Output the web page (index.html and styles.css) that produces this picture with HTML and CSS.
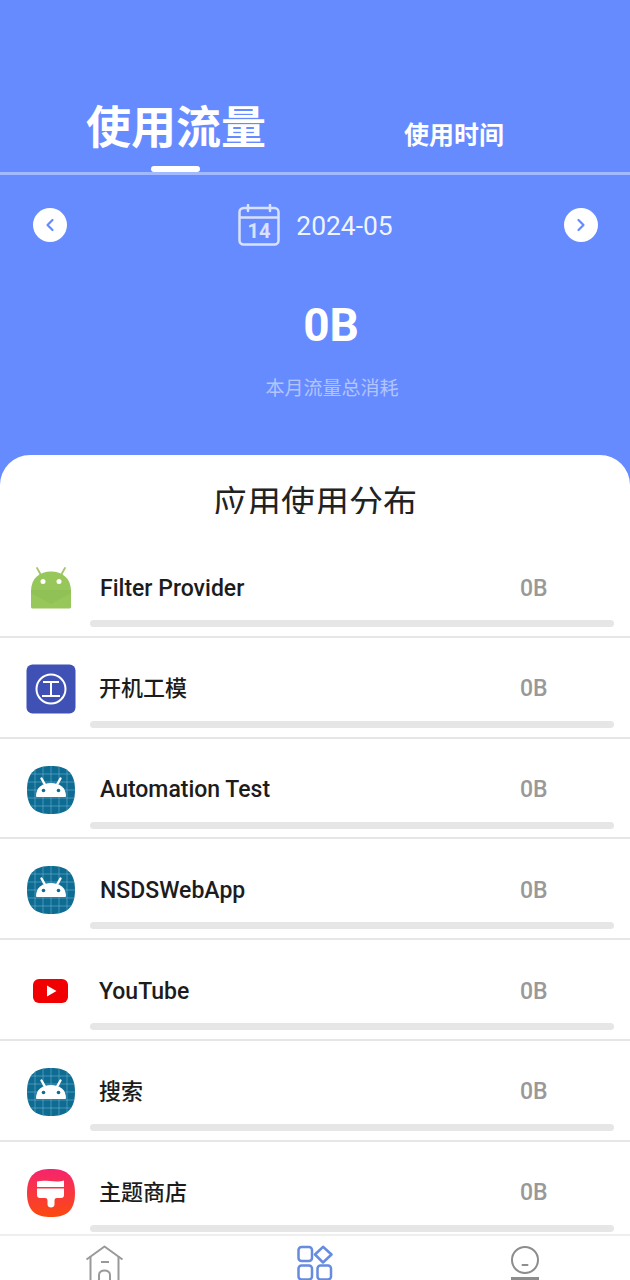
FILE: index.html
```html
<!DOCTYPE html>
<html lang="en">
<head>
    <meta charset="UTF-8">
    <meta name="viewport" content="width=device-width, initial-scale=1.0">
    <title>流量统计</title>
    <link rel="stylesheet" href="styles.css">
</head>
<body>
    <!-- Shared icon for apps without their own artwork -->
    <svg class="defs" width="0" height="0">
        <defs>
            <clipPath id="squircle">
                <path d="M25 1C39 1 49 6 49 25C49 44 39 49 25 49C11 49 1 44 1 25C1 6 11 1 25 1Z"/>
            </clipPath>
        </defs>
        <symbol id="icon-default" viewBox="0 0 50 50">
            <g clip-path="url(#squircle)">
                <rect width="50" height="50" fill="#0e6c92"/>
                <path d="M1 9H49M1 17H49M1 25H49M1 33H49M1 41H49M9 1V49M17 1V49M25 1V49M33 1V49M41 1V49" stroke="#5fa8c6" stroke-width="0.7" fill="none"/>
            </g>
            <path d="M10 31C10 23 16 18 25 18C34 18 40 23 40 31C40 31.500 39.500 32 39 32H11C10.500 32 10 31.500 10 31Z" fill="#fff"/>
            <path d="M15.500 13.500L19.500 20.500M34.500 13.500L30.500 20.500" stroke="#fff" stroke-width="2.400" stroke-linecap="round"/>
            <circle cx="17.500" cy="25.500" r="1.800" fill="#0e6c92"/>
            <circle cx="32.500" cy="25.500" r="1.800" fill="#0e6c92"/>
        </symbol>
    </svg>

    <div class="page">
        <!-- Blue summary header -->
        <header class="header">
            <div class="tabs">
                <div class="tab tab-active">
                    <span class="tab-label">使用流量</span>
                    <span class="tab-mark"></span>
                </div>
                <div class="tab">
                    <span class="tab-label">使用时间</span>
                </div>
            </div>

            <div class="date-row">
                <button class="arrow" type="button">
                    <svg width="12" height="14" viewBox="0 0 12 14"><path d="M8.500 2L3.500 7L8.500 12" fill="none" stroke="#668bff" stroke-width="2.200" stroke-linecap="round" stroke-linejoin="round"/></svg>
                </button>
                <div class="date">
                    <svg class="calendar" width="42" height="42" viewBox="0 0 42 42">
                        <rect x="1.500" y="4" width="39" height="36.500" rx="4" fill="none" stroke="#fff" stroke-width="2.500"/>
                        <path d="M2 13.500H40M10 1V7M32 1V7" fill="none" stroke="#fff" stroke-width="2.500" stroke-linecap="round"/>
                        <text x="21" y="33.500" class="calendar-day">14</text>
                    </svg>
                    <span class="date-text">2024-05</span>
                </div>
                <button class="arrow" type="button">
                    <svg width="12" height="14" viewBox="0 0 12 14"><path d="M3.500 2L8.500 7L3.500 12" fill="none" stroke="#668bff" stroke-width="2.200" stroke-linecap="round" stroke-linejoin="round"/></svg>
                </button>
            </div>

            <div class="total">0B</div>
            <div class="total-caption">本月流量总消耗</div>
        </header>

        <!-- App usage list -->
        <main class="sheet">
            <h2 class="sheet-title">应用使用分布</h2>
            <ul class="app-list">
                <li class="app-row">
                    <div class="app-head">
                        <svg class="app-icon" viewBox="0 0 50 50">
                            <path d="M11 5L15 12M39 5L35 12" stroke="#a4c46c" stroke-width="1.800" stroke-linecap="round"/>
                            <path d="M5 44V28C5 15 14 8.500 25 8.500C36 8.500 45 15 45 28V44C45 45 44 45.500 43 45.500H7C6 45.500 5 45 5 44Z" fill="#97c65b"/>
                            <path d="M5 27H45V30L25 41L5 30Z" fill="#88b850" opacity="0.400"/>
                            <circle cx="17" cy="18.500" r="2.500" fill="#fff"/>
                            <circle cx="33" cy="18.500" r="2.500" fill="#fff"/>
                        </svg>
                        <span class="app-name">Filter Provider</span>
                        <span class="app-value">0B</span>
                    </div>
                    <div class="app-bar"></div>
                </li>
                <li class="app-row">
                    <div class="app-head">
                        <svg class="app-icon" viewBox="0 0 50 50">
                            <rect x="0.500" y="0.500" width="49" height="49" rx="6" fill="#3f51b5"/>
                            <circle cx="25" cy="25" r="14.500" fill="none" stroke="#fff" stroke-width="2"/>
                            <path d="M17 18H33M25 18V32M16 32H34" fill="none" stroke="#fff" stroke-width="2"/>
                        </svg>
                        <span class="app-name app-name-cjk">开机工模</span>
                        <span class="app-value">0B</span>
                    </div>
                    <div class="app-bar"></div>
                </li>
                <li class="app-row">
                    <div class="app-head">
                        <svg class="app-icon"><use href="#icon-default"/></svg>
                        <span class="app-name">Automation Test</span>
                        <span class="app-value">0B</span>
                    </div>
                    <div class="app-bar"></div>
                </li>
                <li class="app-row">
                    <div class="app-head">
                        <svg class="app-icon"><use href="#icon-default"/></svg>
                        <span class="app-name">NSDSWebApp</span>
                        <span class="app-value">0B</span>
                    </div>
                    <div class="app-bar"></div>
                </li>
                <li class="app-row">
                    <div class="app-head">
                        <svg class="app-icon" viewBox="0 0 50 50">
                            <rect x="7" y="13" width="35" height="24" rx="6" fill="#f00000"/>
                            <path d="M21 19.500L30.500 25L21 30.500Z" fill="#fff"/>
                        </svg>
                        <span class="app-name app-name-yt">YouTube</span>
                        <span class="app-value">0B</span>
                    </div>
                    <div class="app-bar"></div>
                </li>
                <li class="app-row">
                    <div class="app-head">
                        <svg class="app-icon"><use href="#icon-default"/></svg>
                        <span class="app-name app-name-cjk">搜索</span>
                        <span class="app-value">0B</span>
                    </div>
                    <div class="app-bar"></div>
                </li>
                <li class="app-row app-row-last">
                    <div class="app-head">
                        <svg class="app-icon" viewBox="0 0 50 50">
                            <defs>
                                <linearGradient id="theme-bg" x1="0" y1="0" x2="0" y2="1">
                                    <stop offset="0" stop-color="#f5246f"/>
                                    <stop offset="1" stop-color="#fb4a0e"/>
                                </linearGradient>
                            </defs>
                            <path d="M25 1C39 1 49 6 49 25C49 44 39 49 25 49C11 49 1 44 1 25C1 6 11 1 25 1Z" fill="url(#theme-bg)"/>
                            <path d="M11 13.500C19 11.500 30 15 38 12.500V19H11Z" fill="#fff"/>
                            <path d="M11 20.500H38V27C38 29 37 30 35 30H31C29 30 28.500 31 28.500 33V36.500C28.500 40.500 21.500 40.500 21.500 36.500V33C21.500 31 21 30 19 30H14C12 30 11 29 11 27Z" fill="#fff"/>
                        </svg>
                        <span class="app-name app-name-cjk">主题商店</span>
                        <span class="app-value">0B</span>
                    </div>
                    <div class="app-bar"></div>
                </li>
            </ul>

            <!-- Bottom navigation, cut off by the window edge -->
            <nav class="bottom-nav">
                <div class="nav-item">
                    <svg width="40" height="44" viewBox="0 0 40 44" fill="none" stroke="#999" stroke-width="2" stroke-linejoin="round">
                        <path d="M1.500 14.500L19.500 1.500L37.500 14.500"/>
                        <path d="M5.500 11V40C5.500 42 7 43 9 43H30C32 43 33.500 42 33.500 40V11"/>
                        <path d="M16 17H24M14 43V30C14 24 25 24 25 30V43"/>
                    </svg>
                </div>
                <div class="nav-item">
                    <svg width="36" height="44" viewBox="0 0 36 44" fill="none" stroke="#668bdf" stroke-width="2.500">
                        <rect x="1.500" y="2" width="13.500" height="14" rx="3"/>
                        <path d="M26 1.800L34.500 9.500L26 17.500L18 9.500Z" stroke-linejoin="round"/>
                        <rect x="1.500" y="20.500" width="13.500" height="14" rx="3"/>
                        <rect x="20.500" y="20.500" width="13.500" height="14" rx="3"/>
                    </svg>
                </div>
                <div class="nav-item">
                    <svg width="30" height="44" viewBox="0 0 30 44" fill="none" stroke="#8d8d8d" stroke-width="2">
                        <ellipse cx="15" cy="15" rx="13" ry="13"/>
                        <path d="M12.500 20H17.500" stroke-linecap="round"/>
                        <path d="M1 34H29" stroke-width="4"/>
                    </svg>
                </div>
            </nav>
        </main>
    </div>
</body>
</html>
```

FILE: styles.css
```css
/* General Reset */
body, html {
    margin: 0;
    padding: 0;
    height: 1280px;
    overflow: hidden;
    font-family: 'Roboto', 'Noto Sans CJK SC', sans-serif;
}

.defs {
    position: absolute;
}

.page {
    display: flex;
    flex-direction: column;
    height: 1280px;
    background-color: #668bff;
}

/* Header */
.header {
    height: 455px;
    flex-shrink: 0;
    color: white;
}

.tabs {
    display: flex;
    align-items: flex-end;
    height: 172px;
    padding: 0 37px;
    border-bottom: 3px solid rgba(255, 255, 255, 0.4);
}

.tab {
    flex: 1;
    display: flex;
    flex-direction: column;
    align-items: center;
    padding-bottom: 19px;
}

.tab-label {
    font-size: 25px;
    font-weight: 700;
    line-height: 34px;
}

.tab-active {
    padding-bottom: 0;
}

.tab-active .tab-label {
    font-size: 45px;
    line-height: 54px;
}

.tab-mark {
    width: 49px;
    height: 6px;
    margin: 10px 2px 0 0;
    border-radius: 3px;
    background: white;
}

.date-row {
    display: flex;
    justify-content: space-between;
    align-items: center;
    height: 42px;
    margin-top: 29px;
    padding: 0 32px 0 33px;
}

.arrow {
    display: flex;
    justify-content: center;
    align-items: center;
    width: 34px;
    height: 34px;
    padding: 0;
    border: none;
    border-radius: 50%;
    background: white;
}

.date {
    display: flex;
    align-items: center;
    gap: 16px;
}

.calendar {
    opacity: 0.75;
}

.calendar-day {
    font-size: 20px;
    font-weight: 700;
    fill: white;
    text-anchor: middle;
}

.date-text {
    padding-top: 1px;
    font-size: 26.4px;
    line-height: 32px;
    color: rgba(255, 255, 255, 0.92);
}

.total {
    margin-top: 52px;
    padding-left: 32px;
    font-size: 46px;
    font-weight: 700;
    line-height: 54px;
    text-align: center;
}

.total-caption {
    margin-top: 24px;
    padding-left: 34px;
    font-size: 19px;
    line-height: 26px;
    text-align: center;
    color: rgba(255, 255, 255, 0.5);
}

/* White sheet */
.sheet {
    flex: 1;
    display: flex;
    flex-direction: column;
    min-height: 0;
    border-radius: 30px 30px 0 0;
    background: white;
}

.sheet-title {
    height: 59px;
    margin: 0 0 23px;
    overflow: hidden;
    font-size: 34px;
    font-weight: 400;
    line-height: 96px;
    text-align: center;
    color: #222;
}

.app-list {
    flex: 1;
    min-height: 0;
    margin: 0;
    padding: 0;
    list-style: none;
    overflow: hidden;
}

.app-row {
    box-sizing: border-box;
    height: 100.8px;
    padding-top: 26px;
    border-bottom: 2px solid #e6e6e6;
}

.app-row-last {
    border-bottom: none;
}

.app-head {
    display: flex;
    align-items: center;
    height: 50px;
    padding-left: 26px;
}

.app-icon {
    width: 50px;
    height: 50px;
    flex-shrink: 0;
}

.app-name {
    flex: 1;
    margin-left: 24px;
    font-size: 23px;
    font-weight: 500;
    color: #1c1c1c;
}

/* CJK glyphs sit low in the Roboto line box */
.app-name-cjk {
    margin: -5px 0 0 23px;
    font-size: 22px;
}

.app-name-yt {
    margin-left: 23px;
}

.app-value {
    width: 110px;
    font-size: 23px;
    font-weight: 500;
    color: #999;
}

.app-bar {
    height: 7px;
    margin: 7px 16px 0 90px;
    border-radius: 4px;
    background: #e6e6e6;
}

/* Bottom navigation */
.bottom-nav {
    display: flex;
    flex-shrink: 0;
    height: 44px;
    overflow: hidden;
    border-top: 2px solid #eee;
    background: white;
}

.nav-item {
    flex: 1;
    display: flex;
    justify-content: center;
    padding-top: 9px;
}
```
